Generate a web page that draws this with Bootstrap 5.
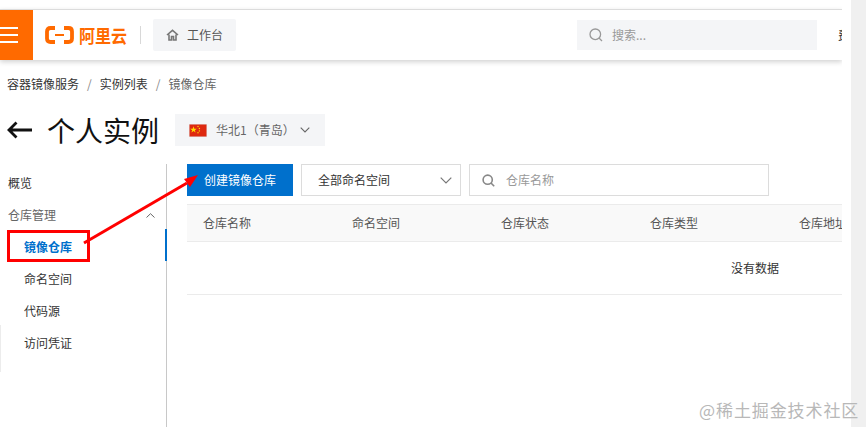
<!DOCTYPE html>
<html lang="zh-CN">
<head>
<meta charset="utf-8">
<title>镜像仓库</title>
<link rel="stylesheet" href="https://cdn.jsdelivr.net/npm/bootstrap@5.3.0/dist/css/bootstrap.min.css">
<style>
html,body{height:100%;overflow:hidden}
body{font-family:"Noto Sans CJK SC","Liberation Sans",sans-serif;font-size:12px;color:#333;background:#fff;line-height:1.5}
.shell{height:427px;display:flex;position:relative}
.pane{width:842px;flex:none;overflow:hidden;display:flex;flex-direction:column}
.gutter{width:15px;margin-left:9px;background:#f0f0f0;flex:none}
.topbar{height:51px;margin-top:9px;border-top:1px solid #dcdcdc;box-shadow:0 2px 5px rgba(0,0,0,.18);display:flex;align-items:center;flex:none;background:#fff}
.burger{width:33px;height:50px;background:#ff6a00;display:flex;flex-direction:column;justify-content:center;gap:5px;flex:none}
.burger i{display:block;width:18px;height:2px;background:#fff}
.brand{margin-left:12px;display:flex;align-items:center;gap:5px;width:83px;color:#ff6a00;font-weight:700;font-size:16px;line-height:1;flex:none;white-space:nowrap}
.brand span{display:inline-block;transform:scaleY(1.12)}
.vsep{width:1px;height:18px;background:#d8d8d8;margin-left:12px;flex:none}
.bench{margin-left:12px;width:83px;height:32px;background:#f4f5f7;border-radius:2px;display:flex;align-items:center;padding-left:13px;gap:8px;color:#555;font-size:12px;flex:none}
.topsearch{margin-left:341px;width:240px;height:30px;background:#f4f5f7;display:flex;align-items:center;padding-left:12px;gap:9px;color:#999;flex:none}
.cutoff{margin-left:21px;font-size:12px;color:#333;flex:none}
.crumbs{margin:15px 0 0 7px;height:18px;display:flex;align-items:center;gap:8px;color:#333;line-height:18px;flex:none}
.crumbs .sl{color:#888}
.crumbs .now{color:#666}
.headline{margin:21px 0 0 7px;height:32px;display:flex;align-items:center;flex:none}
.headline h1{font-size:28px;font-weight:400;color:#111;margin:0 0 0 15px;line-height:32px}
.regionbtn{margin-left:16px;width:150px;height:32px;background:#f4f5f7;display:flex;align-items:center;padding-left:14px;color:#666;gap:9px}
.regionbtn .place{width:73px;white-space:nowrap}
.regionbtn .chev{margin-left:2px}
.work{display:flex;flex:1;margin-top:18px;min-height:0}
.sidenav{width:167px;flex:none;border-right:1px solid #c8c8c8;position:relative;padding-top:3px}
.sideitem{height:32px;line-height:32px;padding-left:8px;color:#333;position:relative}
.sideitem.sub{padding-left:24px}
.sideitem.grp{color:#666;display:flex;justify-content:space-between;align-items:center;padding-right:11px}
.sideitem.on{color:#0070cc;font-weight:700}
.sideitem.on::after{content:"";position:absolute;right:-1px;top:-2px;width:2px;height:32px;background:#0070cc}
.stray{position:absolute;left:0;top:161px;width:1px;height:47px;background:#ececec}
.content{flex:1;padding-left:20px;min-width:0}
.tools{display:flex;height:32px;gap:8px}
.makebtn{width:106px;height:32px;background:#0070cc;color:#fff;border:0;border-radius:0;font-size:12px;padding:0}
.makebtn:hover{background:#0070cc;color:#fff}
.nsselect{width:160px;height:32px;border:1px solid #dcdcdc;display:flex;align-items:center;justify-content:space-between;padding:0 8px 0 16px;color:#333}
.namesearch{width:300px;height:32px;border:1px solid #dcdcdc;display:flex;align-items:center;padding-left:12px;gap:11px;color:#999}
.tablewrap{margin-top:8px;overflow:hidden;border-top:1px solid #ebebeb}
.tablewrap table{width:1136px;table-layout:fixed;margin:0;font-size:12px}
.tablewrap th{height:36px;background:#f9f9f9;font-weight:400;color:#555;padding:0 0 0 16px;vertical-align:middle;border-bottom:1px solid #ebebeb;width:149px}
.tablewrap th:last-child{width:auto}
.tablewrap td{height:53px;text-align:center;vertical-align:middle;color:#333;border-bottom:1px solid #ebebeb;padding:0}
.callout{position:absolute;left:0;top:0;pointer-events:none}
.stamp{position:absolute;left:699px;top:398px;font-size:17px;line-height:24px;color:#b8b8b8;white-space:nowrap;letter-spacing:.9px}
</style>
</head>
<body>
<div class="shell">
  <div class="pane">
    <header class="topbar">
      <div class="burger"><i></i><i></i><i></i></div>
      <div class="brand">
        <svg width="29" height="18" viewBox="0 0 29 18"><path d="M10 2H5.500Q2 2 2 5.500V12.500Q2 16 5.500 16H10M19 2H23.500Q27 2 27 5.500V12.500Q27 16 23.500 16H19" fill="none" stroke="#ff6a00" stroke-width="3.800"/><rect x="10" y="8" width="9" height="2" fill="#ff6a00"/></svg>
        <span>阿里云</span>
      </div>
      <div class="vsep"></div>
      <div class="bench">
        <svg width="13" height="12" viewBox="0 0 13 12"><path d="M1 6 6.500 1.300 12 6M3 5.500V11H5.500V7.500H7.500V11H10V5.500" fill="none" stroke="#777" stroke-width="1.600"/></svg>
        <span>工作台</span>
      </div>
      <div class="topsearch">
        <svg width="14" height="14" viewBox="0 0 14 14"><circle cx="6.300" cy="6.300" r="5.300" fill="none" stroke="#999" stroke-width="1.300"/><path d="M10 10 13 13" stroke="#999" stroke-width="1.300"/></svg>
        <span>搜索...</span>
      </div>
      <div class="cutoff">费用</div>
    </header>
    <nav class="crumbs">
      <span>容器镜像服务</span><span class="sl">/</span><span>实例列表</span><span class="sl">/</span><span class="now">镜像仓库</span>
    </nav>
    <div class="headline">
      <svg width="25" height="18" viewBox="0 0 25 18"><path d="M9.500 1.500 2 9 9.500 16.500M2 9H25" fill="none" stroke="#111" stroke-width="2.800"/></svg>
      <h1>个人实例</h1>
      <div class="regionbtn">
        <svg width="18" height="13" viewBox="0 0 18 13"><rect width="18" height="13" fill="#de2910" stroke="#ddd"/><path d="M4.500 2.300 5.300 4.700H7.800L5.800 6.200 6.600 8.600 4.500 7.100 2.400 8.600 3.200 6.200 1.200 4.700H3.700Z" fill="#ffde00"/><circle cx="9" cy="2.500" r=".7" fill="#ffde00"/><circle cx="10.400" cy="4.500" r=".7" fill="#ffde00"/><circle cx="10.400" cy="6.900" r=".7" fill="#ffde00"/><circle cx="9" cy="8.800" r=".7" fill="#ffde00"/></svg>
        <span class="place">华北1（青岛）</span>
        <svg class="chev" width="10" height="6" viewBox="0 0 10 6"><path d="M.700.700 5 5 9.300.700" fill="none" stroke="#666" stroke-width="1.100"/></svg>
      </div>
    </div>
    <div class="work">
      <aside class="sidenav">
        <div class="sideitem">概览</div>
        <div class="sideitem grp"><span>仓库管理</span><svg width="9" height="5" viewBox="0 0 9 5"><path d="M.5 4.500 4.500.700 8.500 4.500" fill="none" stroke="#666"/></svg></div>
        <div class="sideitem sub on">镜像仓库</div>
        <div class="sideitem sub">命名空间</div>
        <div class="sideitem sub">代码源</div>
        <div class="sideitem sub">访问凭证</div>
        <div class="stray"></div>
      </aside>
      <main class="content">
        <div class="tools">
          <button type="button" class="btn makebtn">创建镜像仓库</button>
          <div class="nsselect"><span>全部命名空间</span><svg width="12" height="7" viewBox="0 0 12 7"><path d="M.700.700 6 6 11.300.700" fill="none" stroke="#777" stroke-width="1.200"/></svg></div>
          <div class="namesearch">
            <svg width="13" height="13" viewBox="0 0 13 13"><circle cx="5.700" cy="5.700" r="4.600" fill="none" stroke="#888" stroke-width="1.600"/><path d="M9 9 12.200 12.200" stroke="#888" stroke-width="1.600"/></svg>
            <span>仓库名称</span>
          </div>
        </div>
        <div class="tablewrap">
          <table class="table">
            <thead><tr><th>仓库名称</th><th>命名空间</th><th>仓库状态</th><th>仓库类型</th><th>仓库地址</th><th></th></tr></thead>
            <tbody><tr><td colspan="6">没有数据</td></tr></tbody>
          </table>
        </div>
      </main>
    </div>
  </div>
  <div class="gutter"></div>
  <svg class="callout" width="866" height="427" viewBox="0 0 866 427">
    <rect x="8.500" y="231.500" width="80" height="29" fill="none" stroke="#f00" stroke-width="3"/>
    <path d="M84 243 187 183" stroke="#f00" stroke-width="3"/>
    <path d="M198 175 184 179 190 187Z" fill="#f00"/>
  </svg>
  <div class="stamp">@稀土掘金技术社区</div>
</div>
<script src="https://cdn.jsdelivr.net/npm/bootstrap@5.3.0/dist/js/bootstrap.bundle.min.js"></script>
</body>
</html>
